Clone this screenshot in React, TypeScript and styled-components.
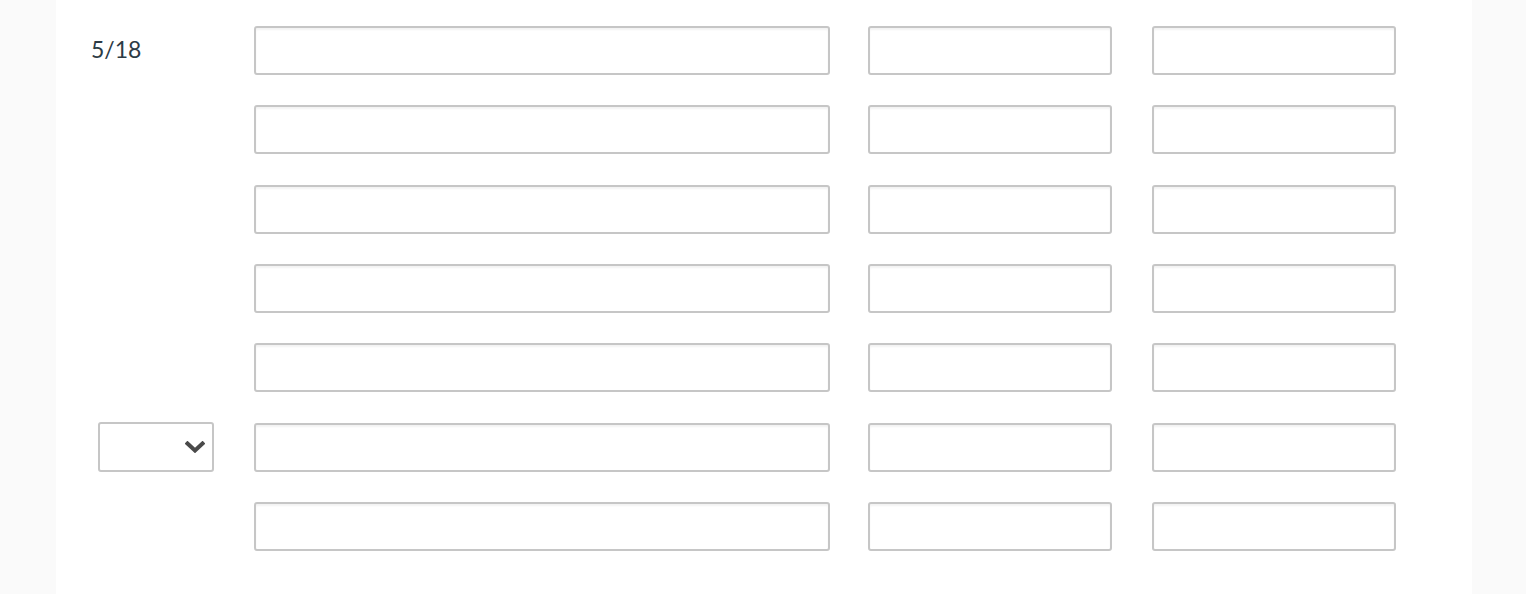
import styled, { createGlobalStyle } from "styled-components";

const GlobalStyle = createGlobalStyle`
  html, body {
    margin: 0;
    padding: 0;
    background: #fafafa;
    font-family: Lato, "Noto Sans", sans-serif;
    overflow: hidden;
  }
`;

const Page = styled.div`
  width: 1526px;
  height: 594px;
  background: #fafafa;
`;

const Panel = styled.div`
  margin-left: 56px;
  width: 1416px;
  height: 594px;
  background: #fff;
  box-sizing: border-box;
  padding: 26px 0 0 35px;
  display: flex;
  flex-direction: column;
  gap: 30.33px;
`;

const Row = styled.div`
  display: flex;
  align-items: center;
  height: 49px;
`;

const LabelCell = styled.div`
  width: 163px;
  display: flex;
  align-items: center;
`;

const Label = styled.span`
  font-size: 23px;
  color: #2d3b45;
  line-height: 1;
  margin-top: -2px;
`;

const Field = styled.input<{ $w: number; $gap: number }>`
  width: ${(p) => p.$w}px;
  margin-right: ${(p) => p.$gap}px;
  height: 49px;
  box-sizing: border-box;
  border: 2px solid #c6c6c6;
  border-radius: 3px;
  box-shadow: inset 0 2px 2px rgba(0, 0, 0, 0.05);
  background: #fff;
  padding: 0 10px;
  font-family: inherit;
  font-size: 16px;
  outline: none;
`;

const SelectBox = styled.div`
  margin-left: 7px;
  width: 116px;
  height: 50px;
  box-sizing: border-box;
  border: 2px solid #c6c6c6;
  border-radius: 3px;
  background: #fff;
  display: flex;
  align-items: center;
  justify-content: flex-end;
  padding-right: 7px;
`;

const Chevron = () => (
  <svg width="20" height="12" viewBox="0 0 20 12">
    <polyline
      points="2.5,2.5 10,9.5 17.5,2.5"
      fill="none"
      stroke="#4a4a4a"
      strokeWidth="4"
      strokeLinecap="square"
      strokeLinejoin="miter"
    />
  </svg>
);

const rows = [0, 1, 2, 3, 4, 5, 6];

export default function App() {
  return (
    <Page>
      <GlobalStyle />
      <Panel>
        {rows.map((i) => (
          <Row key={i}>
            <LabelCell>
              {i === 0 && <Label>5/18</Label>}
              {i === 5 && (
                <SelectBox>
                  <Chevron />
                </SelectBox>
              )}
            </LabelCell>
            <Field $w={576} $gap={38} />
            <Field $w={244} $gap={40} />
            <Field $w={244} $gap={0} />
          </Row>
        ))}
      </Panel>
    </Page>
  );
}
